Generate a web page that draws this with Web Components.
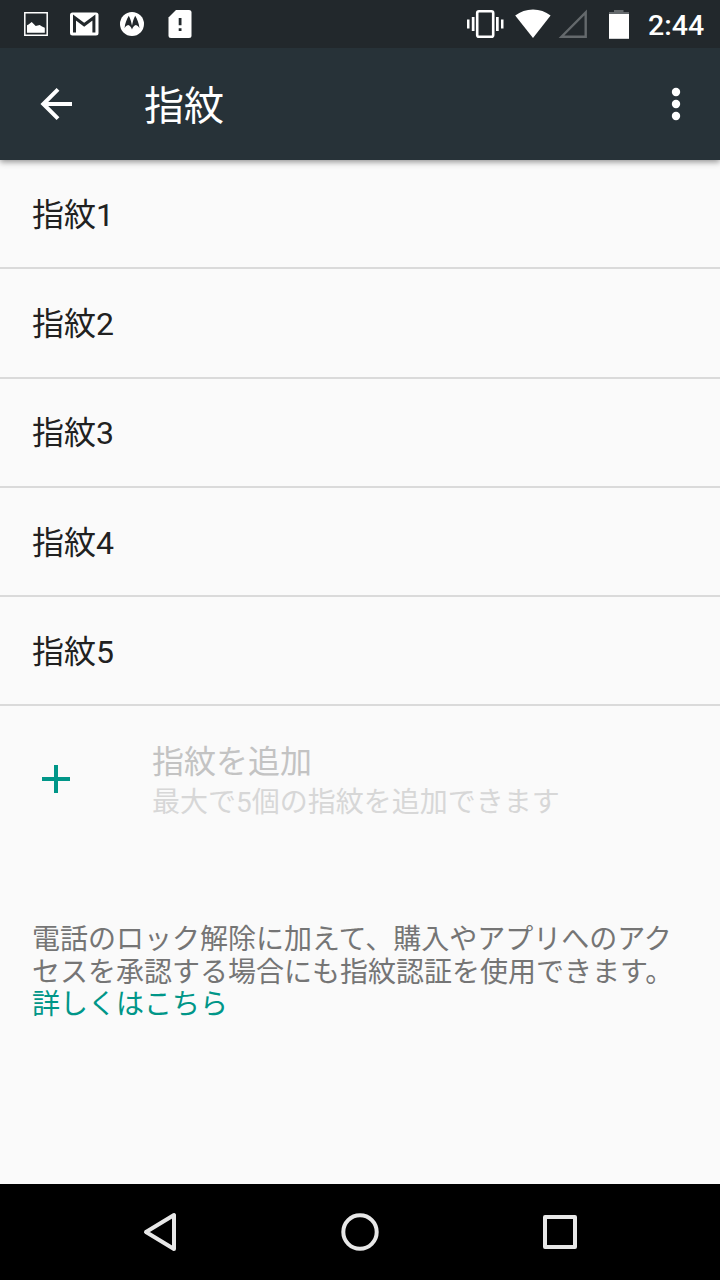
<!DOCTYPE html>
<html lang="ja">
<head>
<meta charset="utf-8">
<title>指紋</title>
<style>
html, body { margin: 0; height: 100%; }
body { font-family: Roboto, "Noto Sans CJK JP", sans-serif; background: #fafafa; overflow: hidden; }
</style>
</head>
<body>
<settings-screen></settings-screen>
<script>
function define(name, html) {
  const template = document.createElement('template');
  template.innerHTML = html;
  customElements.define(name, class extends HTMLElement {
    constructor() {
      super();
      this.attachShadow({ mode: 'open' }).append(template.content.cloneNode(true));
    }
  });
}

define('status-bar', `
<style>
:host { display: flex; justify-content: space-between; height: 48px; box-sizing: border-box; padding: 0 16px 0 24px; background: #22282c; color: #fff; position: relative; z-index: 2; }
div { display: flex; align-items: center; }
svg { display: block; height: 48px; fill: #fff; }
time { width: 56px; font-size: 28.500px; font-weight: 500; line-height: 48px; margin-left: 19px; padding-top: 2px; box-sizing: border-box; height: 48px; text-align: right; }
</style>
<div>
  <svg width="46" viewBox="24 0 46 48"><path fill="none" stroke="#fff" stroke-width="1.500" d="M24.800 12.800h22.400v22.400H24.800z"/><path d="M27 32.800v-7.500l1.500-.8 3.200-2.400 4 3.800 4-.900 2.300 1.600 2.800 1.200v5z"/></svg>
  <svg width="50" viewBox="70 0 50 48"><rect x="70" y="12.500" width="28.500" height="23" rx="2.500"/><path d="M74.500 32.500v-15l9.700 7.300 9.700-7.300v15" fill="none" stroke="#22282c" stroke-width="3"/></svg>
  <svg width="48" viewBox="120 0 48 48"><circle cx="132" cy="24" r="12"/><path fill="#22282c" d="M128.800 15.800c1.500 2.800 2.500 6 3.200 10 .7-4 1.700-7.200 3.200-10 2.200 3.500 3.600 7.400 4.300 12.400-1-1.800-2.200-2.800-3.600-3.200-1.700.4-3 2-3.900 4.400-.9-2.400-2.200-4-3.900-4.400-1.400.4-2.600 1.400-3.600 3.200.7-5 2.100-8.900 4.300-12.400z"/></svg>
  <svg width="24" viewBox="168 0 24 48"><path d="M176 10h13q2.500 0 2.500 2.500v23q0 2.500-2.500 2.500h-18q-2.500 0-2.500-2.500V17.500z"/><path fill="#22282c" d="M178.700 18h2.800v7.300h-2.800zM178.700 28.200h2.800V31h-2.800z"/></svg>
</div>
<div>
  <svg width="48" viewBox="467 0 48 48"><rect x="477.200" y="11.200" width="16" height="25.600" rx="1.800" fill="none" stroke="#fff" stroke-width="2.600"/><path d="M467 19.500h2.500v9H467zM471.800 17h2.700v14h-2.700zM496 17h2.700v14H496zM501 19.500h2.500v9H501z"/></svg>
  <svg width="43" viewBox="515 0 43 48"><path d="M515.200 15.500Q523 9.500 533 9.500t17.600 6L533 38z"/></svg>
  <svg width="51" viewBox="558 0 51 48"><path fill="none" stroke="#64696c" stroke-width="2.400" d="M561.500 36.700h24.200V12.500z"/></svg>
  <svg width="20" viewBox="609 0 20 48"><path fill="#64696c" d="M614 10h9.500v2h5.500v3h-20v-3h5z"/><path d="M609 14h20v24.800h-20z"/></svg>
  <time>2:44</time>
</div>`);

define('app-bar', `
<style>
:host { display: flex; align-items: center; height: 112px; box-sizing: border-box; padding: 0 38px 0 38px; background: #273238; color: #fff; box-shadow: 0 2px 6px rgba(0,0,0,.42); position: relative; z-index: 1; }
svg { display: block; fill: #fff; }
h1 { flex: 1; margin: 0 0 0 70px; padding-top: 5px; font-size: 40px; font-weight: 400; line-height: 56px; }
</style>
<svg width="36" height="36" viewBox="38 86 36 36"><path fill="none" stroke="#fff" stroke-width="4" d="M72 104H43.500M58 89.300L43.300 104 58 118.700"/></svg>
<h1><slot></slot></h1>
<svg width="12" height="36" viewBox="0 0 12 36"><circle cx="6" cy="6" r="4.200"/><circle cx="6" cy="18" r="4.200"/><circle cx="6" cy="30" r="4.200"/></svg>`);

define('finger-item', `
<style>
:host { display: flex; align-items: center; height: 109.300px; box-sizing: border-box; padding: 2.500px 32px 0; border-bottom: 2px solid #dadada; color: #212121; font-size: 32px; line-height: 44px; }
</style>
<span><slot></slot></span>`);

define('add-item', `
<style>
:host { display: flex; align-items: center; height: 146px; box-sizing: border-box; padding: 0 32px 0 42px; }
svg { display: block; margin-right: 82px; }
.text { display: flex; flex-direction: column; padding-top: 6px; }
.title { font-size: 32px; line-height: 42px; color: #c3c3c3; }
.sub { font-size: 28px; line-height: 40px; color: #d7d7d7; }
</style>
<svg width="28" height="28" viewBox="0 0 28 28"><path d="M14 0v28M0 14h28" stroke="#009688" stroke-width="4"/></svg>
<div class="text"><span class="title"><slot></slot></span><span class="sub"><slot name="summary"></slot></span></div>`);

define('foot-note', `
<style>
:host { display: block; padding: 71.500px 32px 0; font-size: 28px; line-height: 32.700px; color: #757575; white-space: nowrap; }
::slotted(a) { color: #009688; text-decoration: none; }
</style>
<slot></slot>`);

define('nav-bar', `
<style>
:host { display: flex; justify-content: center; align-items: center; gap: 152px; height: 96px; background: #000; }
svg { display: block; width: 48px; height: 48px; fill: none; stroke: #e8e8e8; stroke-width: 4; stroke-linejoin: round; }
</style>
<svg viewBox="136 1208 48 48"><path d="M146 1232L174 1215V1249z"/></svg>
<svg viewBox="336 1208 48 48"><circle cx="360" cy="1232" r="16.700"/></svg>
<svg viewBox="536 1208 48 48"><path d="M545 1217h30v30h-30z"/></svg>`);

define('settings-screen', `
<style>
:host { display: flex; flex-direction: column; width: 720px; height: 1280px; background: #fafafa; }
main { flex: 1; min-height: 0; }
</style>
<status-bar></status-bar>
<app-bar>指紋</app-bar>
<main>
  <finger-item>指紋1</finger-item>
  <finger-item>指紋2</finger-item>
  <finger-item>指紋3</finger-item>
  <finger-item>指紋4</finger-item>
  <finger-item>指紋5</finger-item>
  <add-item>指紋を追加<span slot="summary">最大で5個の指紋を追加できます</span></add-item>
  <foot-note>電話のロック解除に加えて、購入やアプリへのアク<br>セスを承認する場合にも指紋認証を使用できます。<br><a>詳しくはこちら</a></foot-note>
</main>
<nav-bar></nav-bar>`);
</script>
</body>
</html>
